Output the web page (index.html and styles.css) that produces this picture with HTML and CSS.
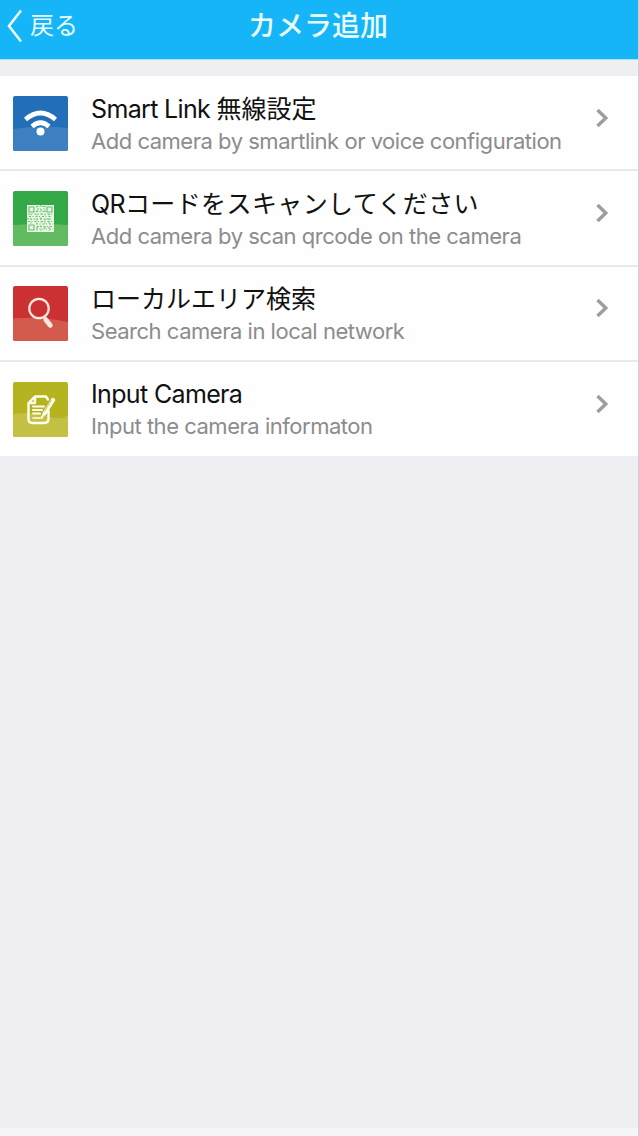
FILE: index.html
```html
<!DOCTYPE html>
<html lang="ja">
<head>
<meta charset="utf-8">
<title>カメラ追加</title>
<link rel="stylesheet" href="styles.css">
</head>
<body>
<div class="screen">
  <header class="navbar">
    <a class="back">
      <svg class="back-icon" viewBox="0 0 16 34"><path d="M14 1.500 2 17 14 32.500"/></svg>
      <span>戻る</span>
    </a>
    <h1 class="heading">カメラ追加</h1>
  </header>
  <main class="list">
    <div class="row">
      <svg class="tile" viewBox="0 0 55 55">
        <rect width="55" height="55" rx="2" fill="#236eb8"/>
        <path d="M0 33Q27 29 55 32V53a2 2 0 0 1-2 2H2a2 2 0 0 1-2-2Z" fill="#3d80c2"/>
        <path d="M12.500 23.500Q27.500 10.500 42.500 23.500M19 30.500Q27.500 23 36 30.500" fill="none" stroke="#fff" stroke-width="4.600"/>
        <circle cx="27.500" cy="35.500" r="4" fill="#fff"/>
      </svg>
      <div class="copy"><div class="title"><span class="latin">Smart Link </span>無線設定</div><div class="sub">Add camera by smartlink or voice configuration</div></div>
      <svg class="chevron" viewBox="0 0 12 20"><path d="M1.500 2 9.800 10 1.500 18"/></svg>
    </div>
    <div class="row">
      <svg class="tile" viewBox="0 0 55 55">
        <rect width="55" height="55" rx="2" fill="#32a946"/>
        <path d="M0 34Q28 32 55 34V53a2 2 0 0 1-2 2H2a2 2 0 0 1-2-2Z" fill="#62bb60"/>
        <rect x="14" y="14" width="27" height="27" fill="#e9f7e5"/>
        <g stroke="#67bd6b" stroke-width="1.100" fill="none">
          <path d="M16 16h5v5h-5zM34 16h5v5h-5zM16 34h5v5h-5z"/>
          <path stroke-dasharray="2 1.500 1 2" d="M23 15.500h9M24 18h8M23 20.500h10M15 23h25M16 25.500h23M14 28h26M15 30.500h25M23 33h17M24 35.500h15M23 38h17"/>
          <path stroke-dasharray="1.200 3 2 2" d="M24 15v25M28 14v26M32 15v24M36 23v17M18 23v10"/>
        </g>
      </svg>
      <div class="copy"><div class="title"><span class="latin">QR</span><span class="wide">コードをスキャンしてください</span></div><div class="sub">Add camera by scan qrcode on the camera</div></div>
      <svg class="chevron" viewBox="0 0 12 20"><path d="M1.500 2 9.800 10 1.500 18"/></svg>
    </div>
    <div class="row">
      <svg class="tile" viewBox="0 0 55 55">
        <rect width="55" height="55" rx="2" fill="#cb3032"/>
        <path d="M0 32.500Q28 30 55 36V53a2 2 0 0 1-2 2H2a2 2 0 0 1-2-2Z" fill="#d25b4d"/>
        <circle cx="26" cy="22.500" r="9.700" fill="none" stroke="#ffe7df" stroke-width="2.200"/>
        <path d="M30.500 30.500 33 33.500" stroke="#ffe7df" stroke-width="2.500"/>
        <path d="m33 34 4.200 5.200" stroke="#ffe7df" stroke-width="5" stroke-linecap="round"/>
      </svg>
      <div class="copy"><div class="title">ローカルエリア検索</div><div class="sub">Search camera in local network</div></div>
      <svg class="chevron" viewBox="0 0 12 20"><path d="M1.500 2 9.800 10 1.500 18"/></svg>
    </div>
    <div class="row">
      <svg class="tile" viewBox="0 0 55 55">
        <rect width="55" height="55" rx="2" fill="#b5b31f"/>
        <path d="M0 32Q20 29 34 34T55 33V53a2 2 0 0 1-2 2H2a2 2 0 0 1-2-2Z" fill="#c3c044"/>
        <g fill="none" stroke="#fffff0" stroke-linejoin="round" stroke-linecap="round">
          <path stroke-width="2.400" d="M35 17.500 33 14.500H22L15.500 21V37q0 4 4 4H31q4.500 0 4.500-4V29M22 15v6h-6"/>
          <path stroke-width="2" d="M20 24.500h11M20 28h9M20 31.500h7"/>
          <path stroke-width="1.600" d="M20 36h7"/>
          <path stroke-width="4.200" d="M40 18 31.500 31.500"/>
          <path stroke-width="2" d="M30.500 32.500 28.500 36"/>
        </g>
        <path d="M38.500 18 31.500 29.500" stroke="#b9b638" stroke-width=".8"/>
      </svg>
      <div class="copy"><div class="title"><span class="latin">Input Camera</span></div><div class="sub">Input the camera informaton</div></div>
      <svg class="chevron" viewBox="0 0 12 20"><path d="M1.500 2 9.800 10 1.500 18"/></svg>
    </div>
  </main>
  <footer class="bottom-strip"></footer>
</div>
</body>
</html>
```
FILE: styles.css
```css
* { box-sizing: border-box; }
body { margin: 0; }
.screen {
  height: 1136px;
  display: flex;
  flex-direction: column;
  background: #efeff3;
  border-right: 1px solid #cfcfd3;
  font-family: Inter, "Noto Sans CJK JP", sans-serif;
  overflow: hidden;
}
.navbar {
  flex: none;
  height: 60px;
  padding: 0 9px 8px 7px;
  display: grid;
  grid-template-columns: 1fr auto 1fr;
  align-items: center;
  background: #16b5f7;
  border-bottom: 1px solid #a9e4fb;
  color: #e9fcff;
}
.back { display: flex; align-items: center; gap: 7px; font-size: 24px; line-height: 50px; }
.back-icon { width: 16px; height: 34px; }
.back-icon path { fill: none; stroke: #e9fcff; stroke-width: 2.6; }
.heading { margin: 0; font-size: 28px; line-height: 50px; font-weight: 500; }
.list { flex: none; margin-top: 16px; background: #fefefe; }
.row {
  height: 95.3px;
  padding: 1px 30px 0 12.5px;
  display: flex;
  align-items: center;
  border-bottom: 2px solid #e9e9ed;
}
.row:last-child { height: 94.1px; border-bottom: 0; }
.tile { width: 55px; height: 55px; flex: none; margin-right: 23.5px; }
.copy { flex: 1; min-width: 0; padding-top: 3px; white-space: nowrap; }
.row:last-child .copy { padding-top: 2px; }
.title { font-size: 25px; line-height: 32px; color: #111; }
.latin { letter-spacing: -0.65px; }
.wide { letter-spacing: 0.4px; }
.sub { font-size: 22px; line-height: 32px; letter-spacing: -0.48px; color: #8c8c8e; }
.chevron { width: 12px; height: 20px; flex: none; margin-bottom: 11px; }
.chevron path { fill: none; stroke: #9d9da0; stroke-width: 3.4; }
.bottom-strip { margin-top: auto; height: 8px; background: #f5f4f6; }
```
